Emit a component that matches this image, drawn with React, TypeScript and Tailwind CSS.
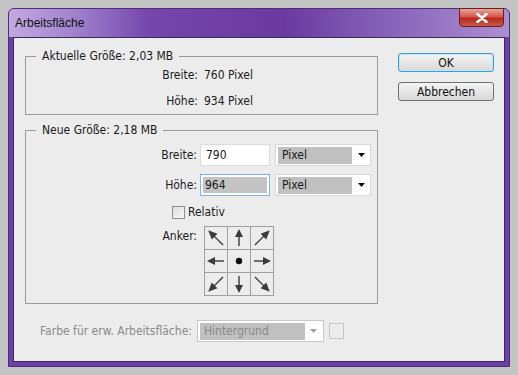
import React from "react";

const font = { fontFamily: '"Liberation Sans", Arial, sans-serif' };
const body = { fontFamily: '"DejaVu Sans Condensed", "DejaVu Sans", Tahoma, sans-serif' };

function Arrow({ dir }: { dir: string }) {
  const rot: Record<string, number> = {
    n: 0,
    ne: 45,
    e: 90,
    se: 135,
    s: 180,
    sw: 225,
    w: 270,
    nw: 315,
  };
  if (dir === "c") {
    return (
      <svg width="22" height="22" viewBox="0 0 22 22">
        <circle cx="11" cy="11" r="3.2" fill="#111" />
      </svg>
    );
  }
  const diag = dir.length === 2;
  return (
    <svg width="22" height="22" viewBox="0 0 22 22">
      <g transform={`rotate(${rot[dir]} 11 11)`}>
        <line x1="11" y1={diag ? 21 : 19} x2="11" y2="8" stroke="#3a3a3a" strokeWidth="1.4" />
        <polygon points={diag ? "11,0 7,9 15,9" : "11,2 7,10 15,10"} fill="#3a3a3a" />
      </g>
    </svg>
  );
}

function Select({ value, disabled, w }: { value: string; disabled?: boolean; w: string }) {
  return (
    <div
      className={`flex h-[22px] items-center border bg-white pl-[2px] ${w} ${
        disabled ? "border-[#c9c9c9]" : "border-[#d8d8d8]"
      }`}
    >
      <div
        className={`flex h-[17px] flex-1 items-center bg-[#c0c0c0] pl-[4px] ${
          disabled ? "text-[#8a8a8a]" : "text-[#1a1a1a]"
        }`}
      >
        {value}
      </div>
      <div className="flex w-[18px] items-center justify-center">
        <svg width="7" height="4" viewBox="0 0 7 4">
          <polygon points="0,0 7,0 3.5,4" fill={disabled ? "#a0a0a0" : "#111"} />
        </svg>
      </div>
    </div>
  );
}

export default function App() {
  const cells = ["nw", "n", "ne", "w", "c", "e", "sw", "s", "se"];
  return (
    <div className="h-[375px] w-[518px] bg-[#c4c4c4] pl-[8px] pt-[8px]" style={font}>
      <div className="flex h-[359px] w-[502px] flex-col rounded-t-[6px] border border-[#4d2d78] bg-[#6c40a8]">
        {/* title bar */}
        <div className="relative flex h-[28px] items-center rounded-t-[5px] bg-[linear-gradient(90deg,#c2a9e0_0%,#a585cf_12%,#7546ad_28%,#6a3aa2_55%,#8e6abd_80%,#ab8fcf_100%)] pl-[6px]">
          <span className="text-[12px] text-[#111]">Arbeitsfläche</span>
          <div className="absolute right-[5px] top-[-1px] flex h-[19px] w-[45px] items-center justify-center rounded-b-[4px] border border-[#6b1f1f] bg-[linear-gradient(180deg,#e8a49a_0%,#d4584a_45%,#b8281c_55%,#c85a48_100%)]">
            <svg width="12" height="10" viewBox="0 0 12 10">
              <path d="M1.5 1 L10.5 9 M10.5 1 L1.5 9" stroke="#fff" strokeWidth="2.6" strokeLinecap="round" />
            </svg>
          </div>
        </div>

        {/* client area */}
        <div
          className="mx-[4px] mb-[4px] flex flex-1 border border-[#3b2a55] bg-[#ececec] text-[12px] text-[#1a1a1a]"
          style={body}
        >
          <div className="flex w-[364px] flex-col pl-[11px] pt-[11px]">
            <fieldset className="h-[66px] border border-[#9a9a9a]">
              <legend className="ml-[10px] px-[6px] leading-[14px]">Aktuelle Größe: 2,03 MB</legend>
              <div className="grid grid-cols-[172px_auto] gap-x-[6px] gap-y-[10px] pt-[4px] leading-[16px]">
                <span className="text-right">Breite:</span>
                <span>760 Pixel</span>
                <span className="text-right">Höhe:</span>
                <span>934 Pixel</span>
              </div>
            </fieldset>

            <fieldset className="mt-[8px] h-[181px] border border-[#9a9a9a]">
              <legend className="ml-[10px] px-[6px] leading-[14px]">Neue Größe: 2,18 MB</legend>
              <div className="flex flex-col pt-[7px]">
                <div className="flex items-center">
                  <span className="w-[171px] text-right">Breite:</span>
                  <div className="ml-[3px] flex h-[22px] w-[70px] items-center border border-[#dcdcdc] bg-white pl-[5px]">
                    790
                  </div>
                  <div className="ml-[5px]">
                    <Select value="Pixel" w="w-[96px]" />
                  </div>
                </div>
                <div className="mt-[8px] flex items-center">
                  <span className="w-[171px] text-right">Höhe:</span>
                  <div className="ml-[3px] flex h-[22px] w-[70px] items-center border border-[#7eb4ea] bg-white p-[2px]">
                    <div className="flex h-full w-full items-center bg-[#c3c3c3] pl-[2px]">964</div>
                  </div>
                  <div className="ml-[5px]">
                    <Select value="Pixel" w="w-[96px]" />
                  </div>
                </div>
                <div className="mt-[7px] flex items-center pl-[146px]">
                  <div className="h-[13px] w-[13px] border border-[#8f8f8f] bg-[linear-gradient(135deg,#dcdcdc,#f8f8f8)]" />
                  <span className="ml-[3px]">Relativ</span>
                </div>
                <div className="mt-[5px] flex items-start">
                  <span className="w-[171px] pt-[1px] text-right">Anker:</span>
                  <div className="ml-[7px] grid grid-cols-3 border-l border-t border-[#a0a0a0]">
                    {cells.map((c) => (
                      <div
                        key={c}
                        className="flex h-[23px] w-[23px] items-center justify-center border-b border-r border-[#a0a0a0]"
                      >
                        <Arrow dir={c} />
                      </div>
                    ))}
                  </div>
                </div>
              </div>
            </fieldset>

            <div className="mt-[16px] flex items-center pl-[15px]">
              <span className="text-[#8a8a8a]">Farbe für erw. Arbeitsfläche:</span>
              <div className="ml-[5px]">
                <Select value="Hintergrund" disabled w="w-[127px]" />
              </div>
              <div className="ml-[5px] h-[16px] w-[15px] border border-[#c6c6c6]" />
            </div>
          </div>

          <div className="ml-[20px] flex flex-col gap-[10px] pt-[15px]">
            <button className="h-[19px] w-[96px] rounded-[3px] border border-[#3c9be0] bg-[linear-gradient(180deg,#f4f4f4_0%,#e6e6e6_50%,#d8d8d8_100%)] leading-none text-[#111] shadow-[inset_0_0_0_1px_#bfe3fb]">
              OK
            </button>
            <button className="h-[19px] w-[96px] rounded-[3px] border border-[#707070] bg-[linear-gradient(180deg,#f4f4f4_0%,#e6e6e6_50%,#d8d8d8_100%)] leading-none text-[#111]">
              Abbrechen
            </button>
          </div>
        </div>
      </div>
    </div>
  );
}
